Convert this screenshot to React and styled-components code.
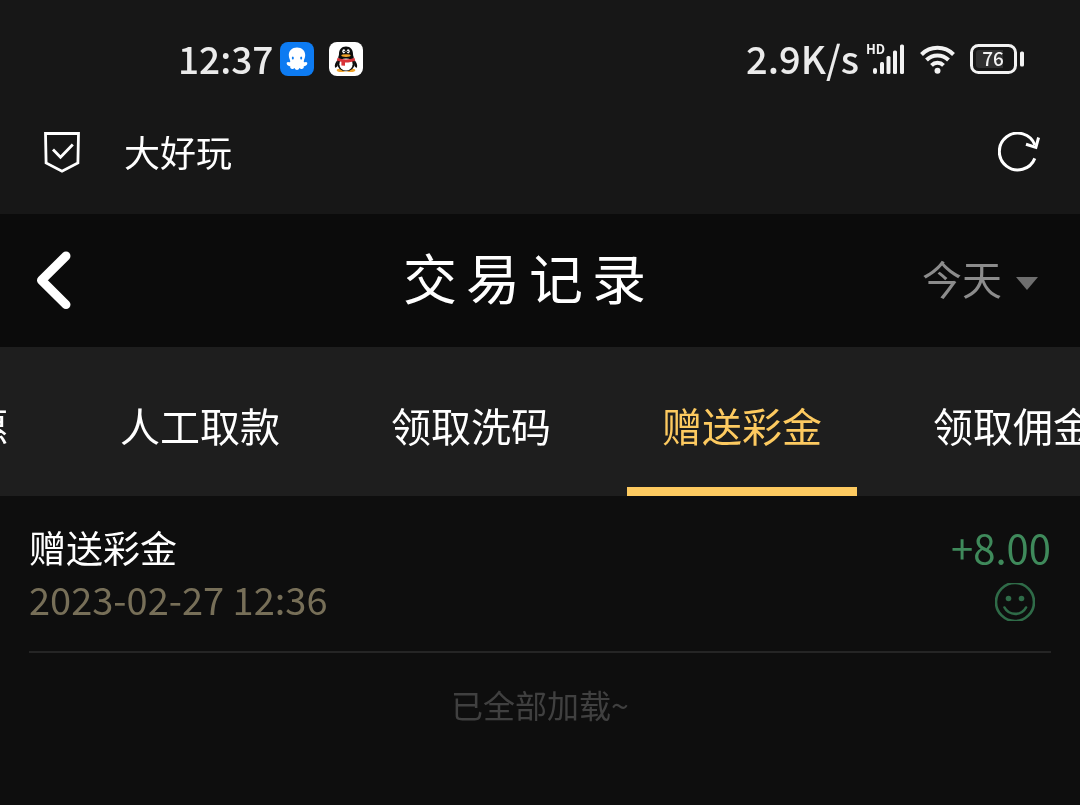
import React, { useLayoutEffect, useRef, useState } from 'react';
import styled, { createGlobalStyle } from 'styled-components';

const GlobalStyle = createGlobalStyle`
  * {
    box-sizing: border-box;
  }

  body {
    margin: 0;
    background: #0e0e0e;
    color: #fff;
    font-family: "Noto Sans CJK SC", "Noto Sans", sans-serif;
  }

  button, select {
    margin: 0;
    padding: 0;
    border: 0;
    background: none;
    color: inherit;
    font: inherit;
    cursor: pointer;
  }

  svg {
    display: block;
    flex: none;
  }
`;

const tabs = ['存款优惠', '人工取款', '领取洗码', '赠送彩金', '领取佣金'];
const ranges = ['今天', '昨天', '本周', '本月'];
const records = [
  { id: 1, name: '赠送彩金', time: '2023-02-27 12:36', amount: '+8.00' },
];

const OctopusIcon = () => (
  <svg width="34" height="34" viewBox="0 0 34 34">
    <rect width="34" height="34" rx="8" fill="#0d7bf2" />
    <path
      fill="#fff"
      d="M17 5.500C12 5.500 8.800 8.800 8.800 13c0 2.800 1.200 4.300 1.400 5.900.2 1.300-.6 1.700-1.500 1.300-1.300-.5-2.400.5-1.900 1.900.5 1.500 2 2.200 3.400 2.100-.3 1.900 1 3.100 2.800 2.700.7-.2 1.200-.5 1.600-.9.4 1.300 1.200 2 2.400 2s2-.7 2.400-2c.4.400.9.700 1.600.9 1.800.4 3.100-.8 2.800-2.700 1.400.1 2.900-.6 3.400-2.100.5-1.400-.6-2.400-1.900-1.900-.9.400-1.700 0-1.500-1.300.2-1.600 1.400-3.100 1.400-5.900 0-4.200-3.200-7.500-8.200-7.500z"
    />
    <ellipse cx="12.800" cy="16" rx="1" ry="1.600" fill="#0d7bf2" />
    <ellipse cx="21.200" cy="16" rx="1" ry="1.600" fill="#0d7bf2" />
  </svg>
);

const PenguinIcon = () => (
  <svg width="34" height="34" viewBox="0 0 34 34">
    <rect width="34" height="34" rx="8" fill="#fff" />
    <path fill="#0b0b0b" d="M9 17.500c-2.500 2.500-3.700 5.500-3 8 .8.600 2-.8 2.500-1.800zM25 17.500c2.500 2.500 3.700 5.500 3 8-.8.600-2-.8-2.500-1.800z" />
    <ellipse cx="12.300" cy="28.300" rx="4.600" ry="1.800" fill="#f0a32a" />
    <ellipse cx="21.700" cy="28.300" rx="4.600" ry="1.800" fill="#f0a32a" />
    <ellipse cx="17" cy="21.500" rx="9" ry="7.700" fill="#0b0b0b" />
    <ellipse cx="17" cy="22.300" rx="6.600" ry="6.300" fill="#fff" />
    <path fill="#0b0b0b" d="M17 4.500c-4.600 0-7 3.300-7 7.500 0 1.800-.8 2.300-.8 4.500h15.600c0-2.200-.8-2.700-.8-4.500 0-4.200-2.400-7.500-7-7.500z" />
    <ellipse cx="14.800" cy="9.300" rx="1.500" ry="2.100" fill="#fff" />
    <ellipse cx="19.200" cy="9.300" rx="1.500" ry="2.100" fill="#fff" />
    <circle cx="15.200" cy="9.500" r=".7" fill="#0b0b0b" />
    <circle cx="18.800" cy="9.500" r=".7" fill="#0b0b0b" />
    <ellipse cx="17" cy="13.600" rx="4.700" ry="1.400" fill="#f0a32a" />
    <path fill="#d83338" d="M8.600 15.800c5 2.300 11.800 2.300 16.800 0l.8 2.600c-3.200 1.600-6.500 2.100-10.200 2v3.400l-3.600-.3v-3.700c-1.700-.3-3.200-.8-4.600-1.600z" />
  </svg>
);

const SignalIcon = () => (
  <svg width="39" height="32" viewBox="0 0 39 32" fill="#f2f2f2" overflow="visible">
    <text x="0" y="11" fontSize="13" fontWeight="700">HD</text>
    <rect x="7" y="25" width="4" height="6" rx="2" />
    <rect x="14" y="19" width="4" height="12" rx="1.500" />
    <rect x="20.500" y="13" width="4" height="18" rx="1.500" />
    <rect x="27" y="7.500" width="4" height="23.500" rx="1.500" />
    <rect x="34" y="1.500" width="4" height="29.500" rx="1.500" />
  </svg>
);

const WifiIcon = () => (
  <svg width="35" height="32" viewBox="0 0 35 32" fill="none" stroke="#f2f2f2" strokeWidth="4">
    <path d="M1.500 11.500a22.500 22.500 0 0 1 32 0" />
    <path d="M6.500 17a15.500 15.500 0 0 1 22 0" />
    <path d="M11.500 22.300a8.500 8.500 0 0 1 12 0" />
    <circle cx="17.500" cy="27.800" r="3" fill="#f2f2f2" stroke="none" />
  </svg>
);

const BatteryIcon = () => (
  <svg width="54" height="32" viewBox="0 0 54 32">
    <rect x="1.500" y="2.500" width="44" height="27" rx="7" fill="none" stroke="#f2f2f2" strokeWidth="3" />
    <path fill="#303030" d="M9 7h24v18H9a3 3 0 0 1-3-3V10a3 3 0 0 1 3-3z" />
    <rect x="50" y="8.500" width="4" height="15" rx="1.500" fill="#f2f2f2" />
    <text x="23" y="23" textAnchor="middle" fontSize="19" fontWeight="500" fill="#f2f2f2">76</text>
  </svg>
);

const ShieldIcon = () => (
  <svg width="36" height="42" viewBox="0 0 36 42" fill="none" stroke="#fff" strokeWidth="2.800">
    <path d="M1.500 1.500h33l-.6 29.500L18 39.200 2.100 31z" />
    <path d="M9 17.500l7.500 7.700 12.300-12.700" />
  </svg>
);

const RefreshIcon = () => (
  <svg width="42" height="42" viewBox="0 0 42 42" fill="none" stroke="#fff" strokeWidth="3">
    <path d="M36.800 26.400A18.400 18.400 0 1 1 36.900 13" />
    <path d="M28 12.200l9.900 3.200 2.700-9.900" />
  </svg>
);

const BackIcon = () => (
  <svg width="36" height="60" viewBox="0 0 36 60" fill="none" stroke="#fff" strokeWidth="9" strokeLinecap="round" strokeLinejoin="round">
    <path d="M30 5L5.500 29.300 30 53.600" />
  </svg>
);

const SmileIcon = () => (
  <svg width="40" height="38" viewBox="0 0 40 38" fill="none" stroke="#2f6b48" strokeWidth="2.600">
    <circle cx="20" cy="19" r="19" />
    <path d="M9.500 24.500c4.500 8.500 17 8.500 21.500 0" strokeLinecap="round" />
    <circle cx="13.500" cy="15.500" r="2.800" fill="#2f6b48" stroke="none" />
    <circle cx="26.500" cy="15.500" r="2.800" fill="#2f6b48" stroke="none" />
  </svg>
);

const App = () => {
  const [active, setActive] = useState('赠送彩金');
  const [range, setRange] = useState('今天');
  const tabBar = useRef(null);

  useLayoutEffect(() => {
    tabBar.current.scrollLeft = 186;
  }, []);

  return (
    <>
      <GlobalStyle />
      <StatusBar>
        <StatusGroup>
          <StatusText>12:37</StatusText>
          <OctopusIcon />
          <PenguinIcon />
        </StatusGroup>
        <StatusGroup>
          <StatusText $large>2.9K/s</StatusText>
          <SignalIcon />
          <WifiIcon />
          <BatteryIcon />
        </StatusGroup>
      </StatusBar>

      <BrowserBar>
        <ShieldIcon />
        <SiteName>大好玩</SiteName>
        <button type="button" aria-label="刷新">
          <RefreshIcon />
        </button>
      </BrowserBar>

      <Header>
        <BackButton type="button" aria-label="返回">
          <BackIcon />
        </BackButton>
        <Title>交易记录</Title>
        <RangePicker>
          <RangeSelect aria-label="日期" value={range} onChange={(e) => setRange(e.target.value)}>
            {ranges.map((item) => (
              <option key={item}>{item}</option>
            ))}
          </RangeSelect>
          <Caret width="22" height="14" viewBox="0 0 22 14">
            <path d="M0 0h22L11 13z" fill="#6e6e6e" />
          </Caret>
        </RangePicker>
      </Header>

      <TabBar ref={tabBar}>
        {tabs.map((tab) => (
          <Tab key={tab} type="button" $active={tab === active} onClick={() => setActive(tab)}>
            {tab}
          </Tab>
        ))}
      </TabBar>

      <RecordList>
        {records.map((record) => (
          <Record key={record.id}>
            <div>
              <RecordName>{record.name}</RecordName>
              <RecordTime>{record.time}</RecordTime>
            </div>
            <RecordResult>
              <Amount>{record.amount}</Amount>
              <Mood>
                <SmileIcon />
              </Mood>
            </RecordResult>
          </Record>
        ))}
      </RecordList>
      <EndNote>已全部加载~</EndNote>
    </>
  );
};

const StatusBar = styled.div`
  display: flex;
  justify-content: space-between;
  height: 92px;
  padding: 26px 56px 0 178px;
  background: #171717;
  color: #ebebeb;
`;

const StatusGroup = styled.div`
  display: flex;
  align-items: center;
  gap: 15px;
`;

const StatusText = styled.span`
  margin-right: -8px;
  padding-bottom: 2px;
  font-size: ${({ $large }) => ($large ? 38 : 37)}px;
  font-weight: 500;
  line-height: 52px;
`;

const BrowserBar = styled.div`
  display: flex;
  align-items: center;
  gap: 44px;
  height: 122px;
  padding: 0 40px 0 44px;
  background: #171717;
`;

const SiteName = styled.span`
  flex: 1;
  padding-bottom: 4px;
  font-size: 36px;
  line-height: 52px;
`;

const Header = styled.header`
  display: grid;
  grid-template-columns: 1fr auto 1fr;
  align-items: center;
  height: 133px;
  padding: 0 42px 0 20px;
  background: #0b0b0b;
`;

const BackButton = styled.button`
  justify-self: start;
  padding: 0 16px;
`;

const Title = styled.h1`
  margin: 0;
  padding-bottom: 8px;
  font-size: 54px;
  font-weight: 400;
  line-height: 80px;
  letter-spacing: 9px;
`;

const RangePicker = styled.div`
  display: grid;
  justify-self: end;
  align-items: center;
`;

const RangeSelect = styled.select`
  grid-area: 1 / 1;
  appearance: none;
  padding: 0 36px 6px 0;
  color: #8c8c8c;
  font-size: 40px;
  line-height: 56px;
`;

const Caret = styled.svg`
  grid-area: 1 / 1;
  justify-self: end;
  margin-top: 6px;
  pointer-events: none;
`;

const TabBar = styled.nav`
  display: flex;
  gap: 41px;
  height: 149px;
  background: #1e1e1e;
  overflow-x: auto;
  scrollbar-width: none;
`;

const Tab = styled.button`
  flex: none;
  width: 230px;
  padding-top: 16px;
  border-bottom: 9px solid ${({ $active }) => ($active ? '#fdca60' : 'transparent')};
  color: ${({ $active }) => ($active ? '#fdca60' : '#fff')};
  font-size: 40px;
`;

const RecordList = styled.ul`
  margin: 0;
  padding: 0 29px;
  list-style: none;
`;

const Record = styled.li`
  display: flex;
  justify-content: space-between;
  padding: 25px 0 26px;
  border-bottom: 2px solid #252525;
`;

const RecordName = styled.div`
  font-size: 37px;
  line-height: 52px;
`;

const RecordTime = styled.div`
  color: #776f58;
  font-size: 38px;
  line-height: 52px;
`;

const RecordResult = styled.div`
  display: flex;
  flex-direction: column;
  align-items: flex-end;
`;

const Amount = styled.div`
  color: #3f8a5b;
  font-size: 40px;
  line-height: 52px;
`;

const Mood = styled.div`
  padding: 10px 16px 0 0;
`;

const EndNote = styled.p`
  margin: 0;
  padding: 25px 0;
  color: #404040;
  font-size: 32px;
  line-height: 52px;
  text-align: center;
`;

export default App;
